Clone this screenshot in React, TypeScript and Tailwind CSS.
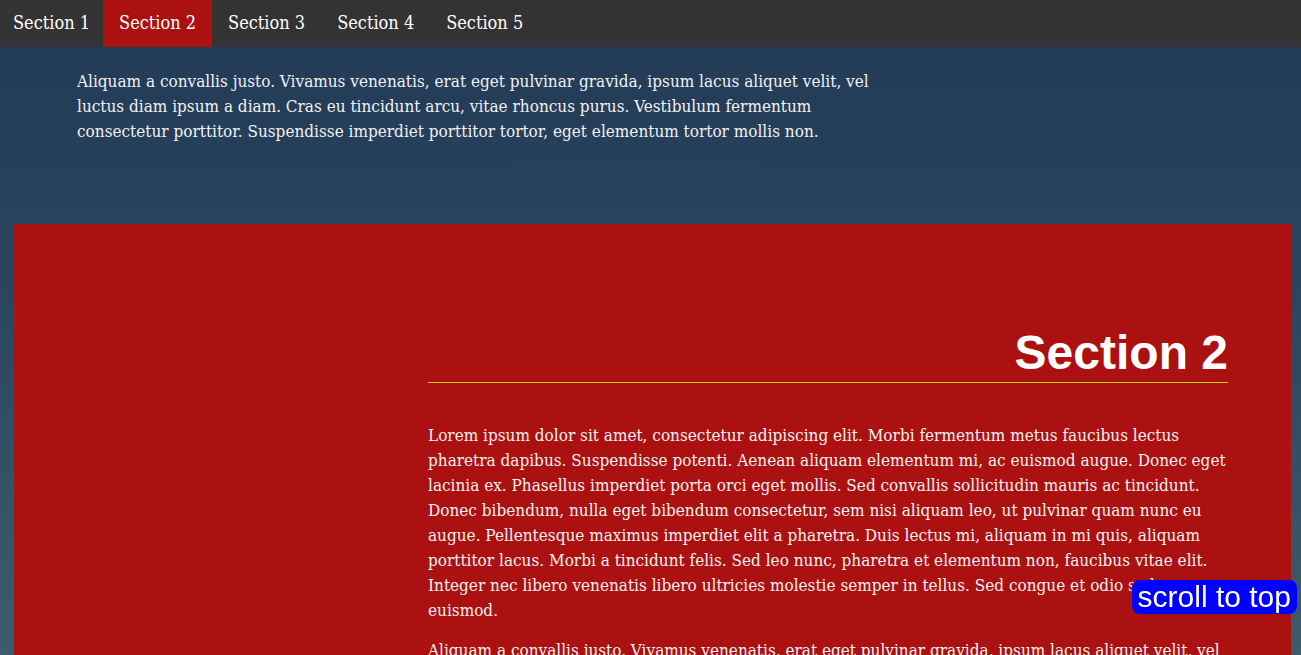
const serif = { fontFamily: '"DejaVu Serif Condensed", "DejaVu Serif", serif' };

const navItems = ['Section 1', 'Section 2', 'Section 3', 'Section 4', 'Section 5'];

const lorem = [
  'Lorem ipsum dolor sit amet, consectetur adipiscing elit. Morbi fermentum metus faucibus lectus pharetra dapibus. Suspendisse potenti. Aenean aliquam elementum mi, ac euismod augue. Donec eget lacinia ex. Phasellus imperdiet porta orci eget mollis. Sed convallis sollicitudin mauris ac tincidunt. Donec bibendum, nulla eget bibendum consectetur, sem nisi aliquam leo, ut pulvinar quam nunc eu augue. Pellentesque maximus imperdiet elit a pharetra. Duis lectus mi, aliquam in mi quis, aliquam porttitor lacus. Morbi a tincidunt felis. Sed leo nunc, pharetra et elementum non, faucibus vitae elit. Integer nec libero venenatis libero ultricies molestie semper in tellus. Sed congue et odio sed euismod.',
  'Aliquam a convallis justo. Vivamus venenatis, erat eget pulvinar gravida, ipsum lacus aliquet velit, vel luctus diam ipsum a diam. Cras eu tincidunt arcu, vitae rhoncus purus. Vestibulum fermentum consectetur porttitor. Suspendisse imperdiet porttitor tortor, eget elementum tortor mollis non.',
];

export default function App() {
  return (
    <div
      className="h-[655px] overflow-hidden bg-[linear-gradient(180deg,#213955_0%,#2a4660_45%,#3c5d6b_100%)] text-[#f2f2f2]"
      style={serif}
    >
      {/* Nav */}
      <nav className="flex h-[47px] bg-[#333333] text-[18px] text-white">
        {navItems.map((item, i) => (
          <a
            key={item}
            href="#"
            className={`flex items-center px-4 pb-[2px] first:pl-[13px] first:pr-[13px] ${i === 1 ? 'bg-[#ab1111]' : ''}`}
          >
            {item}
          </a>
        ))}
      </nav>

      {/* Section 1 (tail) */}
      <section className="pt-[22px] pb-[80px] pl-[77px]">
        <p className="w-[800px] text-[17px] leading-[25px]">{lorem[1]}</p>
      </section>

      {/* Section 2 */}
      <section className="ml-[14px] mr-[10px] bg-[#ab1111] pt-[101px] pr-[63px]">
        <div className="ml-auto w-[800px]">
          <h2
            className="border-b border-[#c8d400] pb-[2px] text-right text-[48px] font-bold leading-[55px] text-white"
            style={{ fontFamily: '"Liberation Sans", Arial, sans-serif' }}
          >
            Section 2
          </h2>
          <div className="mt-[40px] space-y-[15px] text-[17px] leading-[25px]">
            {lorem.map((p, i) => (
              <p key={i}>{p}</p>
            ))}
          </div>
        </div>
      </section>

      <button
        className="fixed right-[4px] bottom-[41px] h-[34px] rounded-lg bg-[#0000ff] px-[6px] text-[30px] leading-[34px] text-white"
        style={{ fontFamily: '"Liberation Sans", Arial, sans-serif' }}
      >
        scroll to top
      </button>
    </div>
  );
}
